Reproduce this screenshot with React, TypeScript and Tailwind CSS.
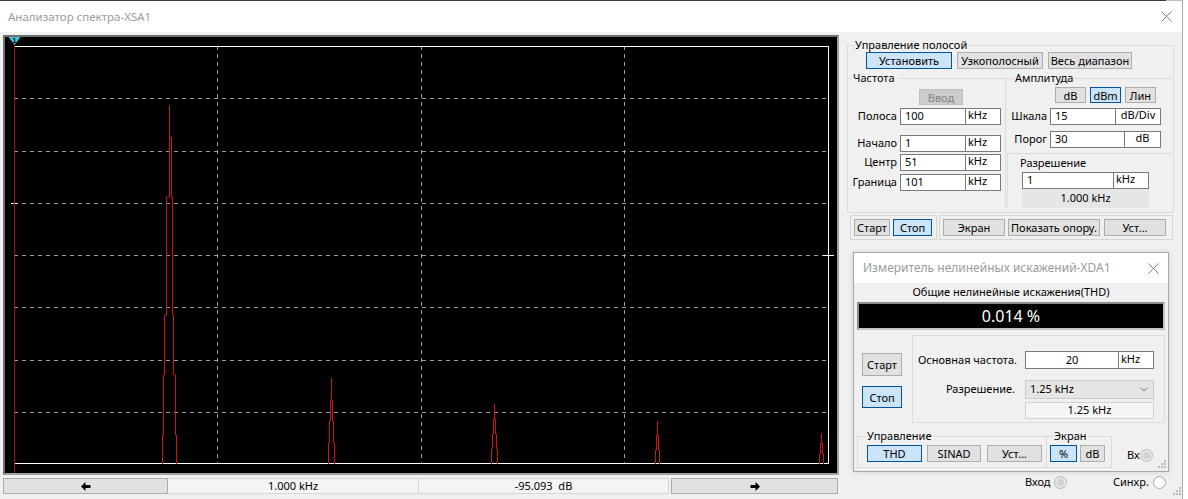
import React from "react";

const ui = "font-['Noto_Sans','DejaVu_Sans',sans-serif]";

type BtnProps = {
  children: React.ReactNode;
  className?: string;
  active?: boolean;
  disabled?: boolean;
};

function Btn({ children, className = "", active, disabled }: BtnProps) {
  const look = disabled
    ? "bg-[#cccccc] border-[#bfbfbf] text-[#838383]"
    : active
    ? "bg-[#cce4f7] border-[#005499] text-black"
    : "bg-[#e1e1e1] border-[#adadad] text-black";
  return (
    <button
      type="button"
      className={`flex shrink-0 items-center justify-center border p-0 text-[11px] leading-none ${look} ${className}`}
    >
      {children}
    </button>
  );
}

type FieldProps = {
  value: string;
  unit: string;
  iw: string;
  uw: string;
  h?: string;
  center?: boolean;
  unitCenter?: boolean;
};

function Field({ value, unit, iw, uw, h = "h-[17px]", center, unitCenter }: FieldProps) {
  return (
    <div className={`flex shrink-0 ${h}`}>
      <div
        className={`${iw} flex items-center border border-[#7a7a7a] bg-white px-[4px] ${
          center ? "justify-center" : ""
        }`}
      >
        {value}
      </div>
      <div
        className={`${uw} flex items-center border border-l-0 border-[#7a7a7a] bg-white px-[2px] pb-[2px] ${
          unitCenter ? "justify-center" : ""
        }`}
      >
        {unit}
      </div>
    </div>
  );
}

function Radio({ filled }: { filled?: boolean }) {
  return (
    <div
      className={`flex h-[13px] w-[13px] shrink-0 items-center justify-center rounded-full border ${
        filled ? "border-[#bdbdbd] bg-[#e6e6e6]" : "border-[#a8a8a8] bg-white"
      }`}
    >
      {filled && <div className="h-[7px] w-[7px] rounded-full bg-[#d2d2d2]" />}
    </div>
  );
}

function CloseIcon() {
  return (
    <svg width="11" height="11" viewBox="0 0 11 11" className="shrink-0">
      <path d="M0.5 0.5 L10.5 10.5 M10.5 0.5 L0.5 10.5" stroke="#7d7d7d" strokeWidth="1" fill="none" />
    </svg>
  );
}

function Grip() {
  const dots = [
    [8, 0],
    [8, 3],
    [5, 3],
    [8, 6],
    [5, 6],
    [2, 6],
  ];
  return (
    <svg width="10" height="9" viewBox="0 0 10 9">
      {dots.map(([x, y], i) => (
        <rect key={i} x={x} y={y} width="2" height="2" fill="#b9b9b9" />
      ))}
    </svg>
  );
}

function Arrow({ dir }: { dir: "left" | "right" }) {
  return (
    <svg width="10" height="9" viewBox="0 0 10 9" className={dir === "right" ? "rotate-180" : ""}>
      <polygon points="0,4.5 4.5,0 4.5,3 9.5,3 9.5,6 4.5,6 4.5,9" fill="#000" />
    </svg>
  );
}

/* stepped spectral line: half-widths per equal vertical segment */
function stepPeak(cx: number, top: number, hws: number[], base = 427) {
  const seg = (base - top) / hws.length;
  let l = `M${cx - hws[0]},${top}`;
  let r = `M${cx + hws[0]},${top}`;
  hws.forEach((hw, i) => {
    const y = Math.round(top + seg * (i + 1));
    if (i > 0) {
      l += ` H${cx - hw}`;
      r += ` H${cx + hw}`;
    }
    l += ` V${y}`;
    r += ` V${y}`;
  });
  return `${l} ${r}`;
}

function Spectrum() {
  const rows = [1, 2, 3, 4, 5, 6, 7].map((k) => Math.round(9 + 52.25 * k) + 0.5);
  const cols = [1, 2, 3].map((k) => Math.round(9 + 203.75 * k) - 0.5);
  const main =
    "M157.5,427 V398 H158.5 V338 H159.5 V278 H161.5 V160 H164.5 V68 " +
    "M171.5,427 V398 H170.5 V338 H168.5 V278 H167.5 V160 H166.5 V100 H164.5";
  const peaks = [
    stepPeak(326.5, 341, [0, 1, 2, 3]),
    stepPeak(489.5, 367, [0, 1, 2, 3]),
    stepPeak(652.5, 384, [0, 1, 2]),
    stepPeak(816.5, 396, [0, 1, 2]),
  ];
  return (
    <svg width="832" height="436" viewBox="0 0 832 436" className="block">
      {rows.map((y) => (
        <line key={y} x1="9" x2="824" y1={y} y2={y} stroke="#9d9d9d" strokeDasharray="4 4" />
      ))}
      {cols.map((x) => (
        <line key={x} x1={x} x2={x} y1="9" y2="427" stroke="#9d9d9d" strokeDasharray="4 4" />
      ))}
      <rect x="9.5" y="9.5" width="814" height="417" fill="none" stroke="#ffffff" />
      <line x1="6" x2="12" y1={rows[2]} y2={rows[2]} stroke="#ffffff" />
      <line x1="818" x2="829" y1={rows[3]} y2={rows[3]} stroke="#ffffff" />
      <g fill="none" stroke="#c8141a" strokeWidth="1">
        <path d={main} />
        {peaks.map((d, i) => (
          <path key={i} d={d} />
        ))}
      </g>
      <line x1="9.5" x2="9.5" y1="7" y2="436" stroke="#9e1414" />
      <polygon points="3.5,0 15.5,0 9.5,8" fill="#3cc7dc" />
      <text x="9.5" y="6" fontSize="7" textAnchor="middle" fill="#000" fontFamily="Liberation Sans, sans-serif" fontWeight="bold">
        1
      </text>
    </svg>
  );
}

function LeftColumn() {
  return (
    <div className="flex w-[841px] shrink-0 flex-col pl-[3px] pt-[3px]">
      <div className="h-[440px] w-[836px] border-2 border-b-[#a0a0a0] border-l-[#6f6f6f] border-r-[#a0a0a0] border-t-[#6f6f6f] bg-black">
        <Spectrum />
      </div>
      <div className="mt-[3px] flex h-[16px] w-[835px] text-[11px]">
        <button type="button" className="flex w-[165px] items-center justify-center border border-[#adadad] bg-[#e1e1e1] p-0">
          <Arrow dir="left" />
        </button>
        <div className="flex w-[251px] items-center justify-center border border-l-0 border-[#d6d6d6] bg-[#f4f4f4]">
          1.000 kHz
        </div>
        <div className="flex w-[250px] items-center justify-center border border-l-0 border-[#d6d6d6] bg-[#f4f4f4]">
          -95.093&nbsp; dB
        </div>
        <button type="button" className="ml-[2px] flex w-[167px] items-center justify-center border border-[#adadad] bg-[#e1e1e1] p-0">
          <Arrow dir="right" />
        </button>
      </div>
    </div>
  );
}

function RightColumn() {
  return (
    <div className="flex flex-1 flex-col text-[11px]">
      <fieldset className="m-0 ml-[6px] mt-[5px] flex h-[176px] w-[327px] flex-col border border-[#dcdcdc] p-0">
        <legend className="ml-[6px] px-[1px] text-[11px] leading-[16px]">Управление полосой</legend>
        <div className="-mt-[1px] ml-[18px] flex gap-[5px]">
          <Btn active className="h-[17px] w-[86px]">Установить</Btn>
          <Btn className="h-[17px] w-[86px]">Узкополосный</Btn>
          <Btn className="h-[17px] w-[84px]">Весь диапазон</Btn>
        </div>
        <div className="mt-[1px] flex flex-1">
          <fieldset className="m-0 flex w-[158px] shrink-0 flex-col border-0 border-r border-t border-[#dcdcdc] p-0">
            <legend className="ml-[3px] px-[2px] leading-[16px]">Частота</legend>
            <Btn disabled className="ml-[71px] mt-[3px] h-[16px] w-[44px]">Ввод</Btn>
            {[
              ["Полоса", "100", "mt-[3px]"],
              ["Начало", "1", "mt-[10px]"],
              ["Центр", "51", "mt-[2px]"],
              ["Граница", "101", "mt-[3px]"],
            ].map(([label, v, mt]) => (
              <div key={label} className={`flex items-center ${mt}`}>
                <span className="w-[49px] text-right">{label}</span>
                <div className="ml-[3px]">
                  <Field value={v} unit="kHz" iw="w-[66px]" uw="w-[35px]" />
                </div>
              </div>
            ))}
          </fieldset>
          <div className="flex w-[166px] flex-col">
            <fieldset className="m-0 flex flex-col border-0 border-t border-[#dcdcdc] p-0">
              <legend className="ml-[7px] px-[2px] leading-[16px]">Амплитуда</legend>
              <div className="ml-[49px] mt-[1px] flex gap-[4px]">
                <Btn className="h-[16px] w-[31px]">dB</Btn>
                <Btn active className="h-[16px] w-[31px]">dBm</Btn>
                <Btn className="h-[16px] w-[31px]">Лин</Btn>
              </div>
              <div className="mt-[5px] flex items-center">
                <span className="w-[41px] text-right">Шкала</span>
                <div className="ml-[3px]">
                  <Field value="15" unit="dB/Div" iw="w-[66px]" uw="w-[45px]" unitCenter />
                </div>
              </div>
              <div className="mt-[6px] flex items-center">
                <span className="w-[41px] text-right">Порог</span>
                <div className="ml-[3px]">
                  <Field value="30" unit="dB" iw="w-[75px]" uw="w-[36px]" unitCenter />
                </div>
              </div>
            </fieldset>
            <div className="ml-[1px] mt-[5px] flex flex-1 flex-col border-l border-t border-[#dcdcdc]">
              <span className="pl-[12px] pt-[1px] leading-[16px]">Разрешение</span>
              <div className="ml-[14px] mt-[1px]">
                <Field value="1" unit="kHz" iw="w-[92px]" uw="w-[35px]" />
              </div>
              <div className="ml-[14px] flex h-[19px] w-[127px] items-center justify-center bg-[#e6e6e6]">1.000 kHz</div>
            </div>
          </div>
        </div>
      </fieldset>

      <div className="ml-[9px] mt-[2px] flex">
        <div className="flex h-[25px] w-[87px] gap-[3px] border border-[#d5d5d5] pl-[3px] pt-[3px]">
          <Btn className="h-[17px] w-[36px]">Старт</Btn>
          <Btn active className="h-[17px] w-[39px]">Стоп</Btn>
        </div>
        <div className="ml-[2px] flex h-[25px] w-[234px] border border-[#d5d5d5] pl-[3px] pt-[3px]">
          <Btn className="h-[17px] w-[62px]">Экран</Btn>
          <Btn className="ml-[3px] h-[17px] w-[92px]">Показать опору.</Btn>
          <Btn className="ml-[4px] h-[17px] w-[62px]">Уст...</Btn>
        </div>
      </div>

      <div className="flex-1" />

      <div className="mb-[9px] flex h-[16px] items-center">
        <span className="ml-[184px] w-[29px]">Вход</span>
        <Radio filled />
        <span className="ml-[46px] w-[40px]">Синхр.</span>
        <Radio />
      </div>
    </div>
  );
}

function ThdDialog() {
  return (
    <div className="absolute left-[853px] top-[252px] flex h-[220px] w-[316px] flex-col border border-[#a8a8a8] bg-[#f0f0f0] text-[11px] shadow-[0_0_6px_rgba(0,0,0,0.12)]">
      <div className="flex h-[30px] shrink-0 items-center justify-between bg-white pl-[9px] pr-[9px]">
        <span className="text-[12px] text-[#9b9b9b]">Измеритель нелинейных искажений-XDA1</span>
        <CloseIcon />
      </div>
      <div className="mt-[1px] text-center leading-[16px]">Общие нелинейные искажения(THD)</div>
      <div className="ml-[3px] mt-[2px] flex h-[28px] w-[308px] items-center justify-center border-2 border-b-[#c4c4c4] border-l-[#8c8c8c] border-r-[#c4c4c4] border-t-[#8c8c8c] bg-black text-[16px] text-white">
        0.014 %
      </div>

      <div className="mt-[5px] flex h-[88px]">
        <div className="flex w-[58px] flex-col">
          <Btn className="ml-[8px] mt-[18px] h-[23px] w-[40px]">Старт</Btn>
          <Btn active className="ml-[8px] mt-[10px] h-[22px] w-[40px]">Стоп</Btn>
        </div>
        <div className="flex w-[253px] flex-col border border-[#dcdcdc]">
          <div className="mt-[15px] flex items-center">
            <span className="w-[112px] pl-[5px]">Основная частота.</span>
            <Field value="20" unit="kHz" iw="w-[94px]" uw="w-[35px]" h="h-[18px]" center />
          </div>
          <div className="mt-[11px] flex items-center">
            <span className="w-[112px] pr-[10px] text-right">Разрешение.</span>
            <div className="flex h-[19px] w-[129px] items-center justify-between border border-[#cccccc] bg-[#e5e5e5] pl-[4px] pr-[5px]">
              <span>1.25 kHz</span>
              <svg width="8" height="5" viewBox="0 0 8 5">
                <path d="M0.5 0.5 L4 4 L7.5 0.5" stroke="#7a7a7a" fill="none" />
              </svg>
            </div>
          </div>
          <div className="ml-[112px] mt-[3px] flex h-[17px] w-[129px] items-center justify-center border border-[#d2d2d2] bg-[#f5f5f5]">
            1.25 kHz
          </div>
        </div>
      </div>

      <div className="mt-[6px] flex items-start">
        <fieldset className="m-0 ml-[3px] h-[39px] w-[190px] border border-[#dcdcdc] p-0">
          <legend className="ml-[8px] px-[1px] leading-[14px]">Управление</legend>
          <div className="ml-[9px] mt-[2px] flex">
            <Btn active className="h-[17px] w-[55px]">THD</Btn>
            <Btn className="ml-[5px] h-[17px] w-[54px]">SINAD</Btn>
            <Btn className="ml-[6px] h-[17px] w-[55px]">Уст...</Btn>
          </div>
        </fieldset>
        <fieldset className="m-0 h-[39px] w-[65px] border border-l-0 border-[#dcdcdc] p-0">
          <legend className="ml-[6px] px-[1px] leading-[14px]">Экран</legend>
          <div className="ml-[3px] mt-[2px] flex gap-[3px]">
            <Btn active className="h-[17px] w-[27px]">%</Btn>
            <Btn className="h-[17px] w-[25px]">dB</Btn>
          </div>
        </fieldset>
        <div className="ml-[15px] mt-[18px] flex h-[16px] items-center">
          <span className="w-[13px]">Вх</span>
          <Radio filled />
        </div>
      </div>
      <div className="absolute bottom-[2px] right-[2px]">
        <Grip />
      </div>
    </div>
  );
}

export default function App() {
  return (
    <div className={`relative h-[499px] w-[1188px] overflow-hidden bg-white text-[11px] text-black ${ui}`}>
      <div className="flex h-full w-[1183px] flex-col border-r border-[#a9a9a9]">
        <div className="flex h-[1px] shrink-0">
          <div className="w-[1166px] bg-[#3c3c3c]" />
          <div className="flex-1 bg-[#bdbdbd]" />
        </div>
        <div className="flex h-[31px] shrink-0 items-center justify-between bg-white pl-[8px] pr-[10px]">
          <span className="text-[11.5px] text-[#9b9b9b]">Анализатор спектра-XSA1</span>
          <CloseIcon />
        </div>
        <div className="flex flex-1 bg-[#f0f0f0]">
          <LeftColumn />
          <RightColumn />
        </div>
      </div>
      <div className="absolute bottom-[3px] right-[7px]">
        <Grip />
      </div>
      <ThdDialog />
    </div>
  );
}
